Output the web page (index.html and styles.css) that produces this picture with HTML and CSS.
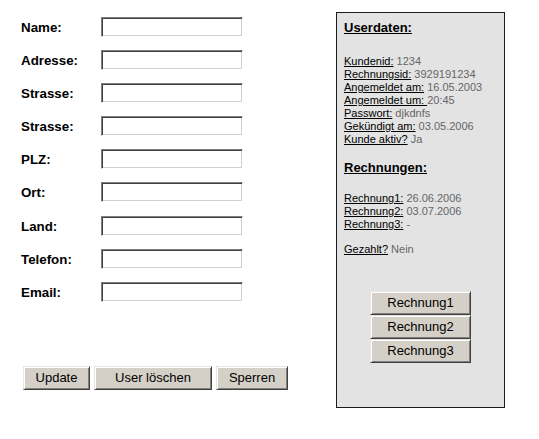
FILE: index.html
```html
<!DOCTYPE html>
<html lang="de">
<head>
<meta charset="utf-8">
<title>Userdaten</title>
<link rel="stylesheet" href="styles.css">
</head>
<body>
<div class="page">
  <form class="form">
    <div class="rows">
      <div class="row"><label class="label">Name:</label><input class="field" type="text"></div>
      <div class="row"><label class="label">Adresse:</label><input class="field" type="text"></div>
      <div class="row"><label class="label">Strasse:</label><input class="field" type="text"></div>
      <div class="row"><label class="label">Strasse:</label><input class="field" type="text"></div>
      <div class="row"><label class="label">PLZ:</label><input class="field" type="text"></div>
      <div class="row"><label class="label">Ort:</label><input class="field" type="text"></div>
      <div class="row"><label class="label">Land:</label><input class="field" type="text"></div>
      <div class="row"><label class="label">Telefon:</label><input class="field" type="text"></div>
      <div class="row"><label class="label">Email:</label><input class="field" type="text"></div>
    </div>
    <div class="actions">
      <button type="button" class="btn btn-update">Update</button>
      <button type="button" class="btn btn-delete">User löschen</button>
      <button type="button" class="btn btn-lock">Sperren</button>
    </div>
  </form>
  <aside class="panel">
    <h2 class="heading">Userdaten:</h2>
    <ul class="info info-user">
      <li><span class="key">Kundenid:</span> <span class="val">1234</span></li>
      <li><span class="key">Rechnungsid:</span> <span class="val">3929191234</span></li>
      <li><span class="key">Angemeldet am:</span> <span class="val">16.05.2003</span></li>
      <li><span class="key">Angemeldet um: </span><span class="val">20:45</span></li>
      <li><span class="key">Passwort:</span> <span class="val">djkdnfs</span></li>
      <li><span class="key">Gekündigt am:</span> <span class="val">03.05.2006</span></li>
      <li><span class="key">Kunde aktiv?</span> <span class="val">Ja</span></li>
    </ul>
    <h2 class="heading heading-bills">Rechnungen:</h2>
    <ul class="info info-bills">
      <li><span class="key">Rechnung1:</span> <span class="val">26.06.2006</span></li>
      <li><span class="key">Rechnung2:</span> <span class="val">03.07.2006</span></li>
      <li><span class="key">Rechnung3:</span> <span class="val">-</span></li>
    </ul>
    <ul class="info info-paid">
      <li><span class="key">Gezahlt?</span> <span class="val">Nein</span></li>
    </ul>
    <div class="bill-buttons">
      <button type="button" class="btn btn-bill">Rechnung1</button>
      <button type="button" class="btn btn-bill">Rechnung2</button>
      <button type="button" class="btn btn-bill">Rechnung3</button>
    </div>
  </aside>
</div>
</body>
</html>
```

FILE: styles.css
```css
html, body {
  margin: 0;
  padding: 0;
  background: #ffffff;
}

body {
  font-family: "Liberation Sans", Arial, sans-serif;
  color: #000;
}

.page {
  display: flex;
  align-items: flex-start;
}

.form {
  flex: none;
  width: 222px;
  margin: 17px 0 0 21px;
  display: flex;
  flex-direction: column;
}

.rows {
  display: flex;
  flex-direction: column;
  gap: 13.1px;
}

.row {
  display: flex;
  align-items: center;
  height: 20px;
}

.label {
  width: 80px;
  padding-top: 2px;
  font-weight: bold;
  font-size: 13.33px;
  line-height: 20px;
  color: #000;
}

.field {
  box-sizing: border-box;
  width: 142px;
  height: 20px;
  margin: 0;
  padding: 0 2px;
  background: #fff;
  border: 1px solid;
  border-color: #808080 #ffffff #ffffff #808080;
  box-shadow: inset 1px 1px 0 #404040, inset -1px -1px 0 #d4d0c8;
  outline: none;
}

.actions {
  display: flex;
  gap: 4px;
  margin: 64px 0 0 2px;
}

.btn {
  flex: none;
  box-sizing: border-box;
  margin: 0;
  padding: 0;
  height: 24px;
  font-family: "Liberation Sans", Arial, sans-serif;
  font-size: 13px;
  color: #000;
  background: #d4d0c8;
  border: 1px solid;
  border-color: #e8e6e1 #404040 #404040 #e8e6e1;
  box-shadow: inset 1px 1px 0 #ffffff, inset -1px -1px 0 #808080;
}

.btn-update { width: 67px; }
.btn-delete { width: 118px; }
.btn-lock { width: 72px; }

.panel {
  flex: none;
  box-sizing: border-box;
  width: 169px;
  height: 396px;
  margin: 12px 0 0 93px;
  padding: 7px 7px;
  background: #e3e3e3;
  border: 1px solid #1c1c1c;
  display: flex;
  flex-direction: column;
}

.heading {
  margin: 0;
  font-size: 13px;
  line-height: 15px;
  font-weight: bold;
  text-decoration: underline;
  color: #000;
}

.heading-bills {
  margin-top: 14px;
}

.info {
  list-style: none;
  margin: 0;
  padding: 0;
  font-size: 11px;
  line-height: 13px;
}

.info-user { margin-top: 20px; }
.info-bills { margin-top: 17px; }
.info-paid { margin-top: 12px; }

.key {
  color: #000;
  text-decoration: underline;
}

.val {
  color: #666;
}

.bill-buttons {
  display: flex;
  flex-direction: column;
  align-items: center;
  gap: 0.5px;
  margin-top: 35px;
}

.btn-bill {
  width: 101px;
  height: 23.5px;
}
```
